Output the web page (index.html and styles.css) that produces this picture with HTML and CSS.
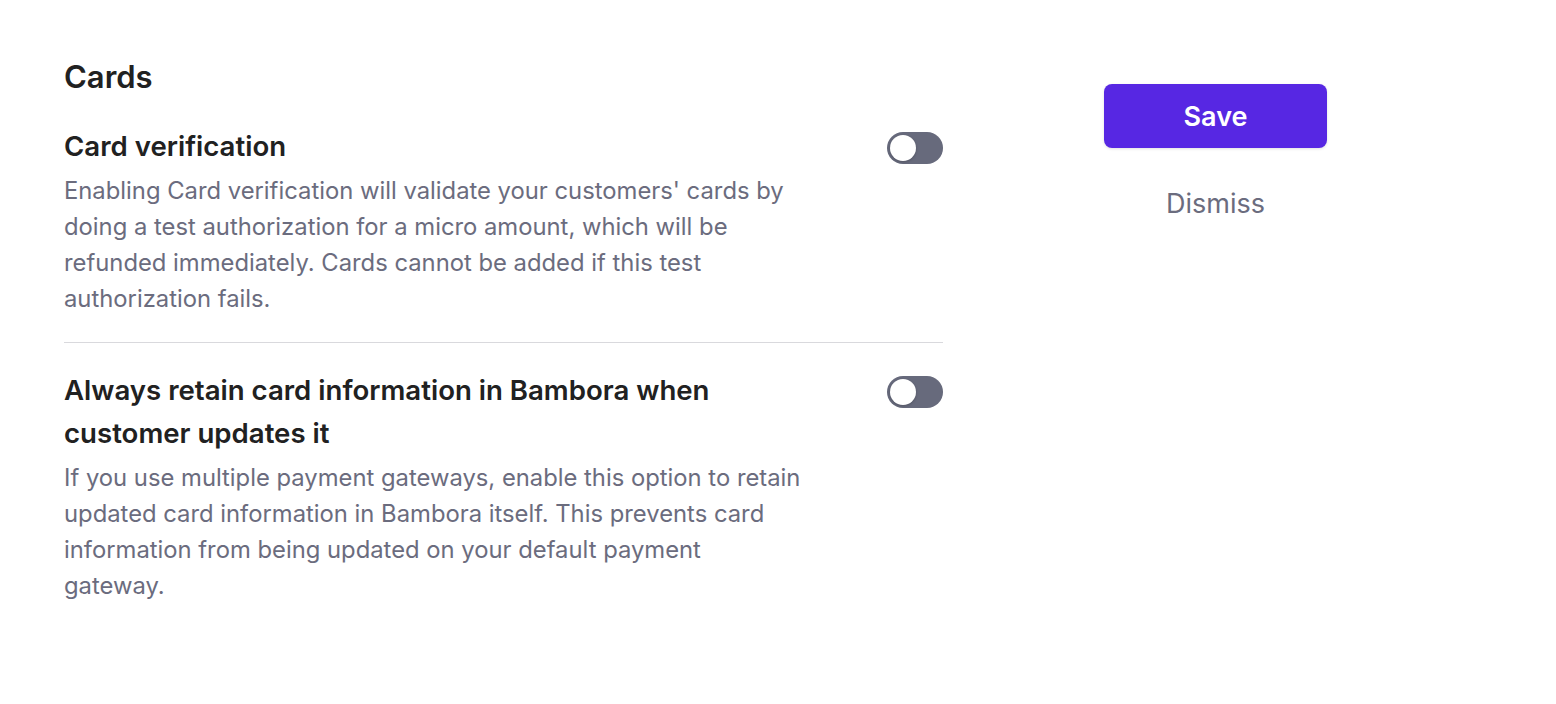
FILE: index.html
```html
<!DOCTYPE html>
<html lang="en">
<head>
<meta charset="utf-8">
<title>Cards</title>
<link rel="stylesheet" href="styles.css">
</head>
<body>
<div class="page">
  <section class="main">
    <h2 class="title">Cards</h2>
    <div class="setting first">
      <div class="text">
        <h3 class="heading">Card verification</h3>
        <p class="desc">Enabling Card verification will validate your customers' cards by doing a test authorization for a micro amount, which will be refunded immediately. Cards cannot be added if this test authorization fails.</p>
      </div>
      <span class="toggle"><span class="knob"></span></span>
    </div>
    <div class="setting second">
      <div class="text">
        <h3 class="heading">Always retain card information in Bambora when customer updates it</h3>
        <p class="desc">If you use multiple payment gateways, enable this option to retain updated card information in Bambora itself. This prevents card information from being updated on your default payment gateway.</p>
      </div>
      <span class="toggle"><span class="knob"></span></span>
    </div>
  </section>
  <aside class="side">
    <button class="save">Save</button>
    <button class="dismiss">Dismiss</button>
  </aside>
</div>
</body>
</html>
```
FILE: styles.css
```css
* { box-sizing: border-box; }
body {
  margin: 0;
  background: #fff;
  font-family: Inter, "Noto Sans", sans-serif;
  color: #212121;
}
.page {
  display: flex;
  padding: 57px 0 0 64px;
}
.main {
  width: 879px;
}
.title {
  margin: 0;
  font-size: 31px;
  line-height: 40px;
  font-weight: 600;
  color: #212121;
}
.setting {
  display: flex;
  justify-content: space-between;
  align-items: flex-start;
}
.setting.first {
  margin-top: 27.5px;
  padding-bottom: 25px;
  border-bottom: 1px solid #d9d9dd;
}
.setting.second {
  padding-top: 26px;
}
.text {
  width: 742px;
}
.heading {
  margin: 0;
  font-size: 27.6px;
  line-height: 43px;
  font-weight: 600;
  color: #212121;
}
.desc {
  margin: 5px 0 0;
  font-size: 23.8px;
  line-height: 36px;
  color: #6b6c7e;
}
.toggle {
  margin-top: 7.5px;
  width: 56px;
  height: 32px;
  border-radius: 16px;
  background: #676a7c;
  padding: 3px;
  display: flex;
  flex-shrink: 0;
}
.knob {
  width: 26px;
  height: 26px;
  border-radius: 50%;
  background: #fff;
  box-shadow: 0 1px 3px rgba(0,0,0,0.2);
}
.side {
  margin-left: 161px;
  width: 223px;
  padding-top: 27px;
  display: flex;
  flex-direction: column;
  align-items: stretch;
}
.save {
  height: 64px;
  border: none;
  border-radius: 8px;
  background: #5727e3;
  color: #fff;
  font-family: inherit;
  font-size: 27px;
  font-weight: 600;
  box-shadow: 0 1px 3px rgba(0,0,0,0.12);
  cursor: pointer;
}
.dismiss {
  margin-top: 20px;
  height: 70px;
  border: none;
  background: none;
  color: #6b6c7e;
  font-family: inherit;
  font-size: 27px;
  cursor: pointer;
}
```
